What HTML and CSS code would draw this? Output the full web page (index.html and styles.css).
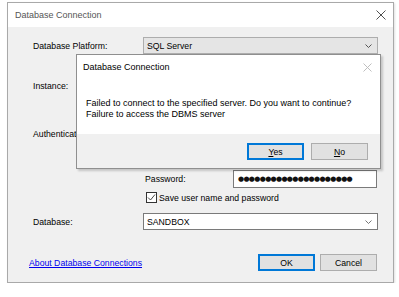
FILE: index.html
```html
<!DOCTYPE html>
<html lang="en">
<head>
  <meta charset="UTF-8">
  <meta name="viewport" content="width=device-width, initial-scale=1.0">
  <title>Database Connection</title>
  <link rel="stylesheet" href="styles.css">
</head>
<body>
  <div class="window">
    <div class="title-bar">
      <span class="title">Database Connection</span>
      <svg class="close-icon" width="10" height="10" viewBox="0 0 10 10">
        <path d="M0.5 0.5 L9.5 9.5 M9.5 0.5 L0.5 9.5" stroke="#3c3c3c" stroke-width="0.9" fill="none"/>
      </svg>
    </div>

    <div class="form">
      <!-- Platform -->
      <div class="row row-platform">
        <div class="label">Database Platform:</div>
        <div class="combo combo-readonly">
          <span>SQL Server</span>
          <svg class="chevron" width="7" height="4" viewBox="0 0 7 4"><path d="M0.5 0.5 L3.5 3.5 L6.5 0.5" stroke="#444" stroke-width="0.9" fill="none"/></svg>
        </div>
      </div>

      <div class="row row-instance">
        <div class="label">Instance:</div>
      </div>

      <div class="row row-auth">
        <div class="label">Authentication:</div>
      </div>

      <!-- Credentials -->
      <div class="row row-password">
        <div class="sub-label">Password:</div>
        <div class="textbox"><span class="dots">●●●●●●●●●●●●●●●●●●●●●</span></div>
      </div>

      <div class="row row-save">
        <div class="checkbox">
          <svg width="9" height="9" viewBox="0 0 9 9"><path d="M1 4.5 L3.5 7 L8 1.5" stroke="#333" stroke-width="0.9" fill="none"/></svg>
        </div>
        <span>Save user name and password</span>
      </div>

      <div class="row row-database">
        <div class="label">Database:</div>
        <div class="combo">
          <span>SANDBOX</span>
          <svg class="chevron" width="7" height="4" viewBox="0 0 7 4"><path d="M0.5 0.5 L3.5 3.5 L6.5 0.5" stroke="#666" stroke-width="0.9" fill="none"/></svg>
        </div>
      </div>

      <div class="footer">
        <a href="#" class="help-link">About Database Connections</a>
        <div class="buttons">
          <button class="btn btn-default">OK</button>
          <button class="btn">Cancel</button>
        </div>
      </div>
    </div>

    <!-- Message box over the form -->
    <div class="msgbox">
      <div class="msg-top">
        <div class="msg-title-bar">
          <span>Database Connection</span>
          <svg class="msg-close" width="9" height="9" viewBox="0 0 9 9">
            <path d="M0.5 0.5 L8.5 8.5 M8.5 0.5 L0.5 8.5" stroke="#b8b8b8" stroke-width="0.9" fill="none"/>
          </svg>
        </div>
        <div class="msg-text">
          Failed to connect to the specified server. Do you want to continue?<br>
          Failure to access the DBMS server
        </div>
      </div>
      <div class="msg-buttons">
        <button class="btn btn-default"><u>Y</u>es</button>
        <button class="btn"><u>N</u>o</button>
      </div>
    </div>
  </div>
</body>
</html>
```

FILE: styles.css
```css
body {
  font-family: 'Liberation Sans', Arial, sans-serif;
  font-size: 8.7px;
  margin: 0;
  padding: 0;
  background-color: #ffffff;
  color: #000;
}

.window {
  position: relative;
  margin: 2px 0 0 7px;
  width: 385px;
  height: 279px;
  border: 1px solid #a9a9a9;
  background-color: #f0f0f0;
  box-shadow: 1px 1px 2px rgba(0, 0, 0, 0.12);
}

.title-bar {
  height: 24px;
  background-color: #fff;
  display: flex;
  align-items: center;
  justify-content: space-between;
  padding: 0 7px 0 7px;
}

.title {
  color: #555;
  font-size: 9px;
}

.form {
  padding: 10px 15px 0 25px;
}

.row {
  display: flex;
  align-items: center;
  height: 17px;
}

.label {
  width: 110px;
  flex-shrink: 0;
}

.combo {
  width: 232px;
  height: 15px;
  border: 1px solid #7a7a7a;
  background-color: #fff;
  display: flex;
  align-items: center;
  justify-content: space-between;
  padding: 0 5px 0 3px;
  box-sizing: content-box;
}

.combo-readonly {
  background-color: #e5e5e5;
  border-color: #adadad;
}

.chevron {
  display: block;
}

.row-instance {
  margin-top: 23px;
}

.row-auth {
  margin-top: 31px;
}

.row-password {
  margin-top: 28px;
  height: 18px;
  padding-left: 112px;
}

.sub-label {
  width: 88px;
}

.textbox {
  width: 138px;
  height: 16px;
  border: 1px solid #7a7a7a;
  background-color: #fff;
  display: flex;
  align-items: center;
  padding-left: 4px;
  overflow: hidden;
}

.dots {
  font-family: 'DejaVu Sans', sans-serif;
  font-size: 7px;
  letter-spacing: -0.68px;
  color: #111;
}

.row-save {
  margin-top: 3px;
  height: 13px;
  padding-left: 113px;
}

.checkbox {
  width: 9px;
  height: 9px;
  border: 1px solid #333;
  background-color: #fff;
  display: flex;
  margin-right: 2px;
}

.row-database {
  margin-top: 9px;
}

.footer {
  display: flex;
  justify-content: space-between;
  align-items: center;
  margin-top: 24px;
  margin-left: -4px;
  padding-right: 1px;
}

.help-link {
  color: #0000ee;
  text-decoration: underline;
}

.buttons {
  display: flex;
  gap: 5px;
}

.btn {
  font-family: inherit;
  font-size: 8.7px;
  width: 57px;
  height: 17px;
  padding: 0;
  background-color: #e1e1e1;
  border: 1px solid #adadad;
  color: #000;
}

.btn-default {
  border: 2px solid #0078d7;
}

.msgbox {
  position: absolute;
  left: 68px;
  top: 51px;
  width: 303px;
  height: 113px;
  border: 1px solid #8f8f8f;
  background-color: #f0f0f0;
  box-shadow: 2px 2px 2px rgba(0, 0, 0, 0.18);
  display: flex;
  flex-direction: column;
}

.msg-top {
  background-color: #fff;
  height: 79px;
}

.msg-title-bar {
  display: flex;
  justify-content: space-between;
  align-items: center;
  padding: 7px 8px 0 6px;
  font-size: 9px;
}

.msg-close {
  display: block;
}

.msg-text {
  padding: 26px 0 0 9px;
  font-size: 9px;
  line-height: 11px;
}

.msg-buttons {
  display: flex;
  justify-content: flex-end;
  gap: 7px;
  padding: 9px 12px 0 0;
}
```
